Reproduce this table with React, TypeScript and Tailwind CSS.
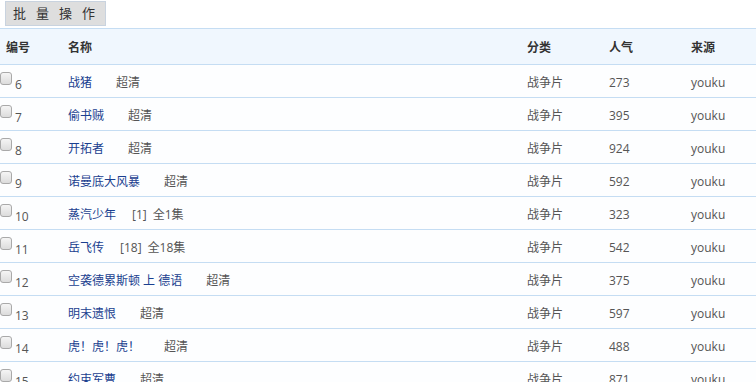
import * as React from 'react';

type Row = {
	id: number;
	name: string;
	extra: string[];
	gap: string;
	hot: number;
};

const rows: Row[] = [
	{ id: 6, name: '战猪', extra: ['超清'], gap: 'ml-6', hot: 273 },
	{ id: 7, name: '偷书贼', extra: ['超清'], gap: 'ml-6', hot: 395 },
	{ id: 8, name: '开拓者', extra: ['超清'], gap: 'ml-6', hot: 924 },
	{ id: 9, name: '诺曼底大风暴', extra: ['超清'], gap: 'ml-6', hot: 592 },
	{ id: 10, name: '蒸汽少年', extra: ['[1]', '全1集'], gap: 'ml-4', hot: 323 },
	{ id: 11, name: '岳飞传', extra: ['[18]', '全18集'], gap: 'ml-4', hot: 542 },
	{ id: 12, name: '空袭德累斯顿 上 德语', extra: ['超清'], gap: 'ml-6', hot: 375 },
	{ id: 13, name: '明末遗恨', extra: ['超清'], gap: 'ml-6', hot: 597 },
	{ id: 14, name: '虎！虎！虎！', extra: ['超清'], gap: 'ml-6', hot: 488 },
	{ id: 15, name: '约束军曹', extra: ['超清'], gap: 'ml-6', hot: 871 },
];

const cols = 'grid grid-cols-[62px_459px_82px_82px_1fr]';

const App = () => {
	return (
		<div
			className="w-[756px] h-[382px] overflow-hidden bg-white text-[12px] text-[#555]"
			style={{ fontFamily: '"Open Sans", "Noto Sans CJK SC", sans-serif' }}
		>
			<div className="h-[28px] pt-[1px] pl-[5px]">
				<button className="h-[25px] w-[101px] bg-[#dedede] border border-[#c9d3df] text-[#333] text-[13px] tracking-[10px] pl-[7px] leading-none text-left whitespace-nowrap">
					批量操作
				</button>
			</div>
			<div className={`${cols} h-[37px] pt-[2px] items-center bg-[#f0f7fe] border-y border-[#c5ddf3] font-bold text-[#333] text-[12px]`}>
				<div className="pl-[6px]">编号</div>
				<div className="pl-[6px]">名称</div>
				<div className="pl-[6px]">分类</div>
				<div className="pl-[6px]">人气</div>
				<div className="pl-[6px]">来源</div>
			</div>
			{rows.map((r) => (
				<div
					key={r.id}
					className={`${cols} h-[33px] pt-[4px] items-center bg-[#fdfeff] border-b border-[#c5ddf3]`}
				>
					<div className="flex items-start h-[20px]">
						<span className="mt-[-1px] w-[12px] h-[13px] rounded-[3px] border border-[#a9a9a9] bg-gradient-to-b from-[#f5f5f5] to-[#dcdcdc]" />
						<span className="ml-[3px] mt-[6px] leading-none text-[12px]">{r.id}</span>
					</div>
					<div className="pl-[6px] flex items-center">
						<a className="text-[#1a3f8f]">{r.name}</a>
						<span className={r.gap}>{r.extra[0]}</span>
						{r.extra[1] && <span className="ml-[6px]">{r.extra[1]}</span>}
					</div>
					<div className="pl-[6px]">战争片</div>
					<div className="pl-[6px]">{r.hot}</div>
					<div className="pl-[6px]">youku</div>
				</div>
			))}
		</div>
	);
};

export default App;
